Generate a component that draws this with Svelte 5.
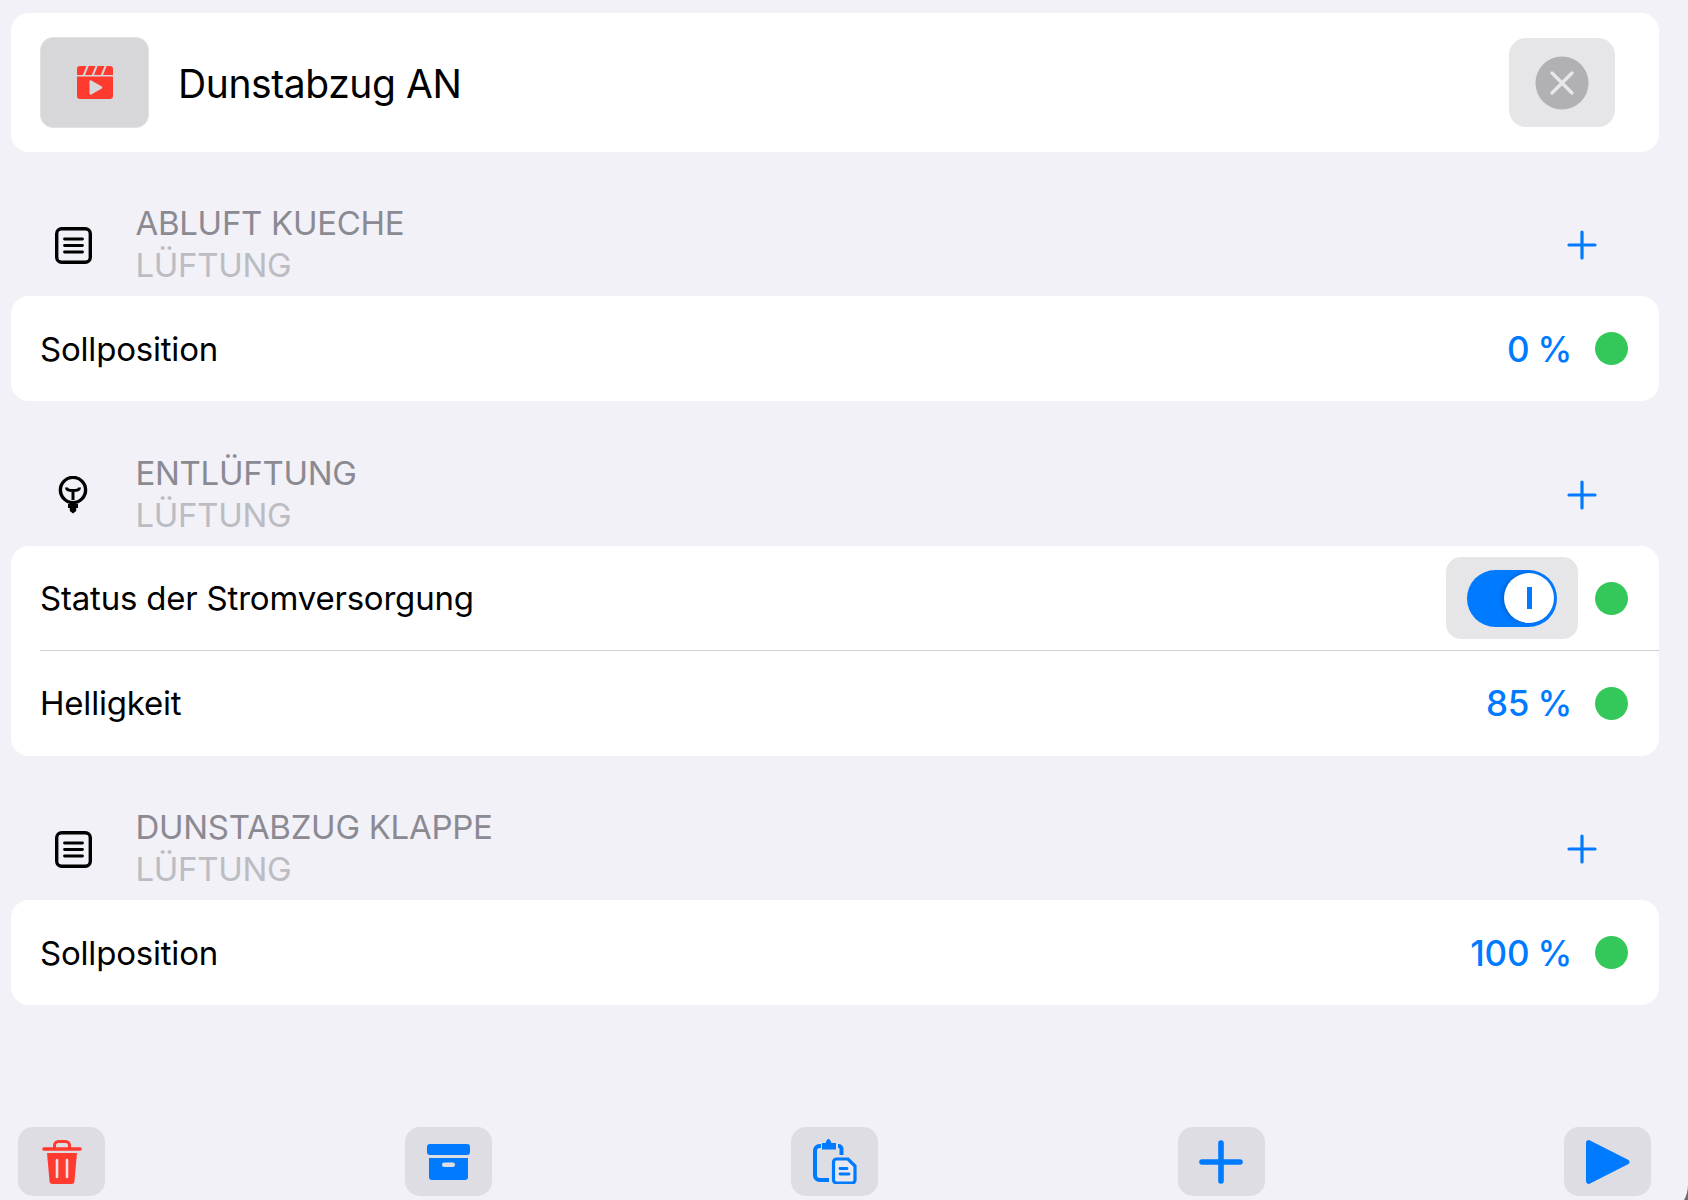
<script>
  const sections = [
    { id: 'doc', title: 'ABLUFT KUECHE', rows: [{ label: 'Sollposition', value: '0 %' }] },
    { id: 'bulb', title: 'ENTLÜFTUNG', rows: [{ label: 'Status der Stromversorgung', toggle: true }, { label: 'Helligkeit', value: '85 %' }] },
    { id: 'doc', title: 'DUNSTABZUG KLAPPE', rows: [{ label: 'Sollposition', value: '100 %' }] }
  ];
</script>

<div class="page">
  <header class="card top">
    <button class="icon-btn" aria-label="Symbol">
      <svg width="36" height="33" viewBox="0 0 36 33">
        <path fill="#ff3b30" d="M3 0h30a3 3 0 0 1 3 3v6H0V3a3 3 0 0 1 3-3z"/>
        <path stroke="#d7d7da" stroke-width="2" d="M11 -1L6.500 10M20 -1L15.500 10M29 -1L24.500 10"/>
        <path fill="#ff3b30" d="M0 10.500h36V30a3 3 0 0 1-3 3H3a3 3 0 0 1-3-3z"/>
        <path fill="#d8d8da" d="M12.500 15.500c0-1 1-1.500 1.800-1l10.500 6c.8.500.8 1.500 0 2l-10.500 6c-.8.500-1.800 0-1.800-1z"/>
      </svg>
    </button>
    <h1>Dunstabzug AN</h1>
    <button class="close-btn" aria-label="Schließen">
      <svg width="54" height="54" viewBox="0 0 54 54">
        <circle cx="27" cy="27" r="26.500" fill="#b0b0b5"/>
        <path d="M17 17l20 20M37 17L17 37" stroke="#e8e8ea" stroke-width="3.400" stroke-linecap="round"/>
      </svg>
    </button>
  </header>

  {#each sections as s}
    <section>
      <div class="head">
        <span class="head-icon">
          {#if s.id === 'doc'}
            <svg width="37" height="37" viewBox="0 0 37 37" fill="none" stroke="#000" stroke-linecap="round">
              <rect x="1.700" y="1.700" width="33.600" height="33.600" rx="5" stroke-width="3.400"/>
              <path d="M9.500 12h18M9.500 18.500h18M9.500 25h18" stroke-width="2.800"/>
            </svg>
          {:else}
            <svg width="30" height="38" viewBox="0 0 30 38" fill="none" stroke="#000">
              <circle cx="15" cy="14" r="12.600" stroke-width="3.400"/>
              <path d="M8.500 11.500c0 3 6.500 3 6.500 3s6.500 0 6.500-3M15 13v11" stroke-width="3"/>
              <path d="M10 28h10v4h-1.800v3L15 37.500 11.800 35v-3H10z" fill="#000" stroke="none"/>
            </svg>
          {/if}
        </span>
        <div class="titles">
          <div class="t1">{s.title}</div>
          <div class="t2">LÜFTUNG</div>
        </div>
        <svg class="plus" width="30" height="30" viewBox="0 0 30 30">
          <path d="M2 15h26M15 2v26" stroke="#007aff" stroke-width="3.200" stroke-linecap="round"/>
        </svg>
      </div>
      <div class="card">
        {#each s.rows as r}
          <div class="row">
            <span class="label">{r.label}</span>
            {#if r.toggle}
              <span class="toggle-wrap">
                <span class="toggle"><span class="knob"><i></i></span></span>
              </span>
            {:else}
              <span class="value">{r.value}</span>
            {/if}
            <span class="dot"></span>
          </div>
        {/each}
      </div>
    </section>
  {/each}

  <footer>
    <button class="tool" aria-label="Löschen">
      <svg width="40" height="45" viewBox="0 0 40 45">
        <path fill="none" stroke="#ff3b30" stroke-width="3" d="M12.500 9V6.500a4 4 0 0 1 4-4h7a4 4 0 0 1 4 4V9"/>
        <path stroke="#ff3b30" stroke-width="3.600" stroke-linecap="round" d="M2 10h36"/>
        <path fill="#ff3b30" d="M5 14h30l-2.500 28a3 3 0 0 1-3 3h-19a3 3 0 0 1-3-3z"/>
        <path stroke="#e4dfe4" stroke-width="2.600" stroke-linecap="round" d="M15 21v17M25 21v17"/>
      </svg>
    </button>
    <button class="tool" aria-label="Archiv">
      <svg width="43" height="36" viewBox="0 0 43 36">
        <rect width="43" height="11" rx="3" fill="#007aff"/>
        <path fill="#007aff" d="M2 14h39v19a3 3 0 0 1-3 3H5a3 3 0 0 1-3-3z"/>
        <rect x="15" y="18.500" width="13" height="4.500" rx="2.200" fill="#dedde6"/>
      </svg>
    </button>
    <button class="tool" aria-label="Einfügen">
      <svg width="44" height="45" viewBox="0 0 44 45" fill="none" stroke="#007aff">
        <path stroke-width="4" d="M16 41H6.500A4.500 4.500 0 0 1 2 36.500V11.500A4.500 4.500 0 0 1 6.500 7H8M25 7h.5a3 3 0 0 1 3 3v6"/>
        <path fill="#007aff" stroke="none" d="M9 4h3.500C13.500 2 14 0 15.500 0s2 2 3 4H23v6.500H9z"/>
        <path fill="#e8e8ee" stroke-width="3.200" d="M20.500 23a3 3 0 0 1 3-3h11.500l7 7v14a3 3 0 0 1-3 3H23.500a3 3 0 0 1-3-3z"/>
        <path stroke-width="2.800" stroke-linecap="round" d="M27 29.500h7M27 35h9"/>
      </svg>
    </button>
    <button class="tool" aria-label="Hinzufügen">
      <svg width="44" height="44" viewBox="0 0 44 44">
        <path d="M3 22h38M22 3v38" stroke="#007aff" stroke-width="5.600" stroke-linecap="round"/>
      </svg>
    </button>
    <button class="tool play" aria-label="Ausführen">
      <svg width="44" height="44" viewBox="0 0 44 44">
        <path fill="#007aff" d="M0 3c0-2.400 2.500-3.700 4.500-2.300l37.500 19c2 1.200 2 3.400 0 4.600L4.500 43.300C2.500 44.700 0 43.400 0 41z"/>
      </svg>
    </button>
  </footer>
  <svg class="corner" width="4" height="15" viewBox="0 0 4 15" aria-hidden="true">
    <path fill="#6b6b70" d="M4 0C3.800 6 2.500 11 0 15h4z"/>
  </svg>
</div>

<style>
  :global(body) { margin: 0; background: #f1f1f7; }
  .page {
    position: relative;
    box-sizing: border-box;
    height: 1200px;
    display: flex;
    flex-direction: column;
    padding: 13px 29px 4px 11px;
    font-family: Inter, "Noto Sans", sans-serif;
    color: #000;
    overflow: hidden;
  }
  .corner { position: absolute; right: 0; bottom: 0; }
  button { border: 0; padding: 0; display: flex; align-items: center; justify-content: center; }
  .card { background: #fff; border-radius: 18px; }
  .top { height: 139px; margin-bottom: -0.500px; display: flex; align-items: center; padding: 0 44px 0 29px; }
  .icon-btn { width: 109px; height: 91px; border-radius: 13px; background: #d7d7da; border: 1.500px solid #e2e2e4; box-sizing: border-box; }
  h1 { margin: 1px 0 0 29px; font-size: 39px; font-weight: 400; letter-spacing: -0.4px; flex: 1; }
  .close-btn { width: 106px; height: 89px; border-radius: 17px; background: #e6e6e9; }
  .head { margin: 50.500px 0 8px; height: 86px; display: flex; align-items: center; }
  .head-icon { width: 37px; margin-left: 43.500px; display: flex; justify-content: center; }
  .titles { margin: -2px 0 0 44px; flex: 1; font-size: 33px; line-height: 42px; letter-spacing: -0.3px; }
  .t1 { color: #8b8a92; }
  .t2 { color: #bcbcc3; }
  .plus { margin-right: 62px; }
  .row {
    height: 105px;
    box-sizing: border-box;
    display: flex;
    align-items: center;
    margin-left: 29px;
    padding-right: 31px;
    font-size: 33px;
    letter-spacing: -0.2px;
  }
  .row + .row { border-top: 1px solid #cfcfd2; margin-top: -1px; height: 106px; }
  .label { flex: 1; }
  .value { color: #007aff; font-weight: 500; font-size: 35px; word-spacing: -1px; margin-right: 23px; }
  .toggle-wrap {
    width: 132px;
    height: 82px;
    margin-right: 17px;
    border-radius: 15px;
    background: #e6e6e9;
    display: flex;
    align-items: center;
    justify-content: center;
  }
  .toggle {
    width: 90px;
    height: 57px;
    border-radius: 29px;
    background: #007aff;
    display: flex;
    align-items: center;
    justify-content: flex-end;
    padding-right: 3px;
    box-sizing: border-box;
  }
  .knob {
    width: 50px;
    height: 50px;
    border-radius: 50%;
    background: #fff;
    box-shadow: -2px 0 4px rgba(0, 0, 0, 0.2);
    display: flex;
    align-items: center;
    justify-content: center;
  }
  .knob i { width: 5px; height: 22px; background: #007aff; }
  .dot { width: 33px; height: 33px; border-radius: 50%; background: #34c759; }
  footer {
    margin-top: auto;
    display: flex;
    justify-content: space-between;
    padding: 0 8px 0 7px;
  }
  .tool { width: 87px; height: 69px; border-radius: 15px; background: #dedde3; }
  .play { padding-left: 1px; }
</style>
